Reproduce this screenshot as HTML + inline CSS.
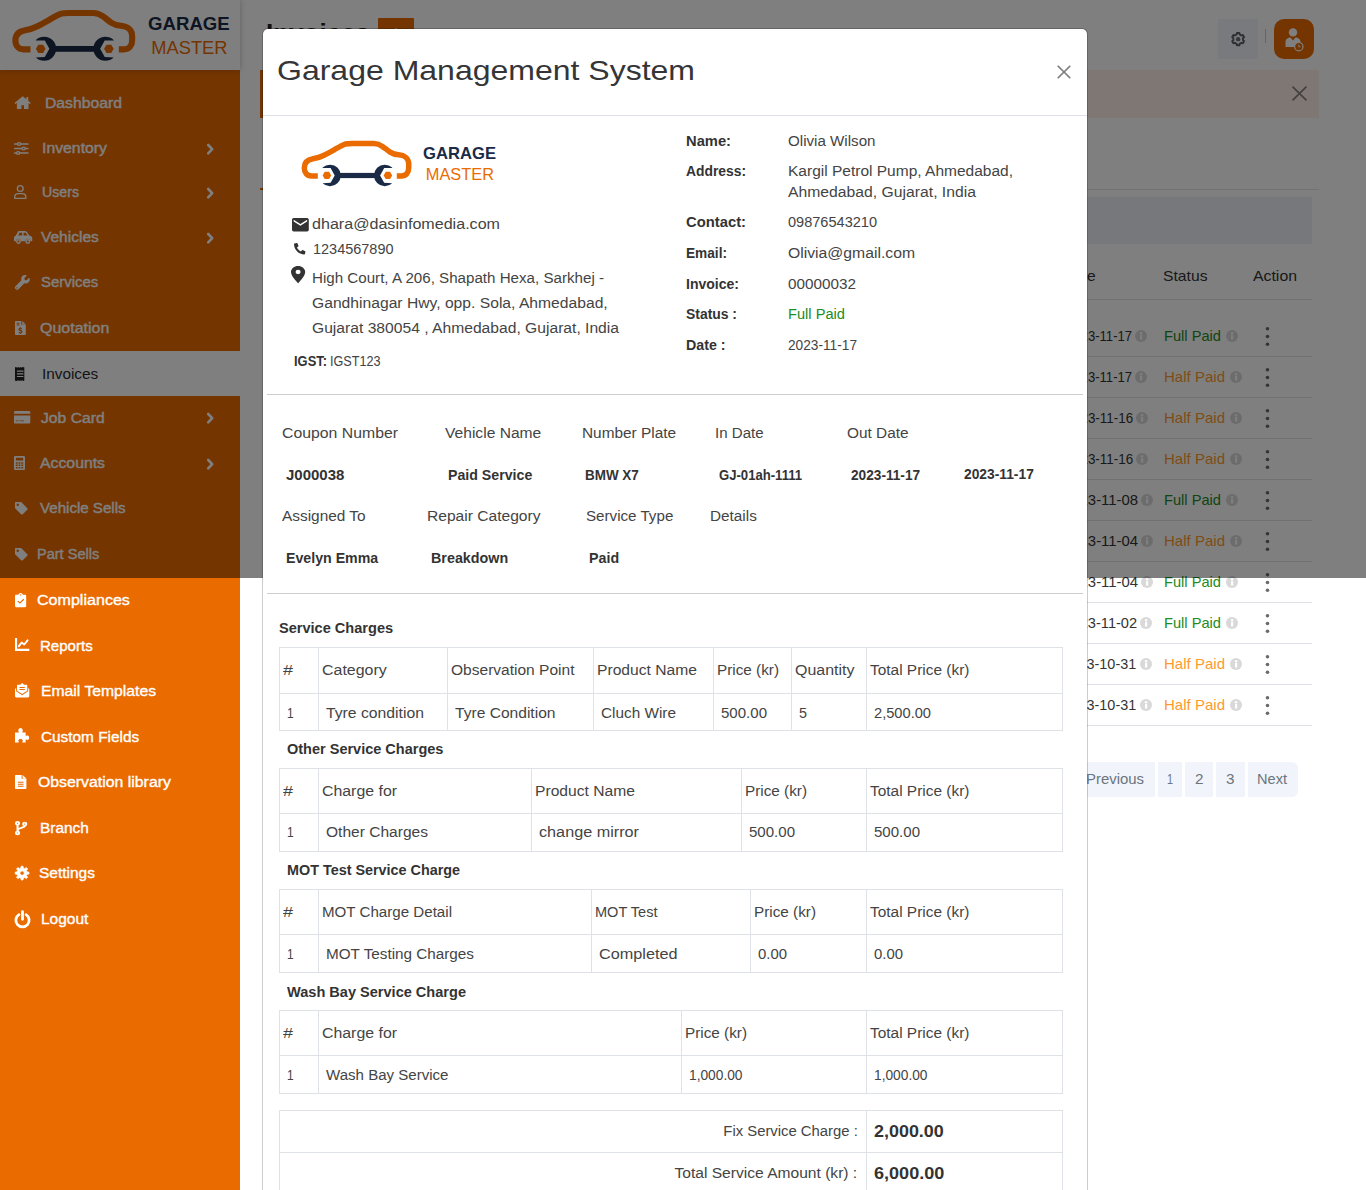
<!DOCTYPE html>
<html><head><meta charset="utf-8"><title>Invoices</title>
<style>
html,body{margin:0;padding:0}
body{width:1366px;height:1190px;overflow:hidden;background:#fff;position:relative;font-family:'Liberation Sans',sans-serif}
.a{position:absolute}
.t{position:absolute;white-space:pre;font-family:'Liberation Sans',sans-serif}
#page,#modal,#ov{position:absolute;left:0;top:0}
#page,#modal{width:1366px;height:1190px}
#ov{width:1366px;height:578px;background:rgba(0,0,0,.5)}
.ln{position:absolute;background:#dee2e6}
svg{position:absolute;overflow:visible}
</style></head>
<body>
<div id="page">
<div class="a" style="left:0px;top:70px;width:240px;height:1120px;background:#ea6b00;"></div>
<div class="a" style="left:0px;top:351px;width:240px;height:45px;background:#fff;"></div>
<div class="a" style="left:0px;top:0px;width:240px;height:70px;background:#fff;box-shadow:0 0 6px rgba(0,0,0,.25);"></div>
<svg style="left:4.5px;top:-2.1px" width="234.8" height="72.7" viewBox="0 0 210 65">
<path d="M22.8 45.9H16.5C12 45.9 9.3 42.5 9.3 38C9.3 32.5 13 29.6 18 28.8C23 28 26 26.8 28.5 25.5C33 23.3 36.5 21.3 40 19.3C44 17 47 15.2 50.4 14C52.5 13.4 54.5 13.4 57 13.4H79C82.5 13.4 85 14.6 87.5 16.4C90.5 18.5 92.5 20.4 95.1 22.1C98 24 100.5 24.600 103.7 24.8C109.5 25.2 113.7 28.5 113.7 34V38C113.7 42.5 111 45.9 106.5 45.9H101.8" fill="none" stroke="#ea6b00" stroke-width="5.5" stroke-linejoin="round"/>
<path d="M27.6 37.6A10.75 10.75 0 1 1 27.6 53.2L35.6 52.7L39.7 45.4L35.6 38.1L27.6 38.1Z M97.2 37.6A10.75 10.75 0 1 0 97.2 53.2L89.2 52.7L85.1 45.4L89.2 38.1L97.2 38.1Z" fill="#1b2a47"/>
<rect x="44" y="42.9" width="36.8" height="5.2" fill="#1b2a47"/>
<path d="M36.2 45.4L34.05 49.1H29.75L27.6 45.4L29.75 41.7H34.05Z M97.2 45.4L95.05 49.1H90.75L88.6 45.4L90.75 41.7H95.05Z" fill="#ea6b00"/>
<text x="128" y="28.6" font-family="'Liberation Sans',sans-serif" font-weight="700" font-size="17" fill="#1b2a47" textLength="73" lengthAdjust="spacingAndGlyphs">GARAGE</text>
<text x="130.8" y="50.1" font-family="'Liberation Sans',sans-serif" font-size="17.2" fill="#ea6b00" textLength="68.2" lengthAdjust="spacingAndGlyphs">MASTER</text>
</svg>
<div class="a" style="left:378px;top:18px;width:36px;height:30px;background:#ea6b00;border-radius:1px;"></div>
<div class="a" style="left:1218px;top:19px;width:40px;height:40px;background:#f1f4fb;"></div>
<div class="a" style="left:1265px;top:29px;width:1px;height:14px;background:#c8c8c8;"></div>
<div class="a" style="left:1274px;top:19px;width:40px;height:40px;background:#ea6b00;border-radius:10px;"></div>
<div class="a" style="left:260px;top:70px;width:1059px;height:47.5px;background:#ffefe6;border-left:3px solid #ea6b00;box-sizing:border-box;"></div>
<div class="a" style="left:260px;top:189px;width:1059px;height:1px;background:#dee2e6;"></div>
<div class="a" style="left:260px;top:187.5px;width:10px;height:2.5px;background:#ea6b00;"></div>
<div class="a" style="left:267px;top:197px;width:1045px;height:47px;background:#eef1f7;"></div>
<div class="a" style="left:267px;top:299px;width:1045px;height:1px;background:#dee2e6;"></div>
<div class="a" style="left:267px;top:356px;width:1045px;height:1px;background:#dee2e6;"></div>
<div class="a" style="left:267px;top:397px;width:1045px;height:1px;background:#dee2e6;"></div>
<div class="a" style="left:267px;top:438px;width:1045px;height:1px;background:#dee2e6;"></div>
<div class="a" style="left:267px;top:479px;width:1045px;height:1px;background:#dee2e6;"></div>
<div class="a" style="left:267px;top:520px;width:1045px;height:1px;background:#dee2e6;"></div>
<div class="a" style="left:267px;top:561px;width:1045px;height:1px;background:#dee2e6;"></div>
<div class="a" style="left:267px;top:602px;width:1045px;height:1px;background:#dee2e6;"></div>
<div class="a" style="left:267px;top:643px;width:1045px;height:1px;background:#dee2e6;"></div>
<div class="a" style="left:267px;top:684px;width:1045px;height:1px;background:#dee2e6;"></div>
<div class="a" style="left:267px;top:725px;width:1045px;height:1px;background:#dee2e6;"></div>
<div class="a" style="left:1075px;top:762px;width:80px;height:35px;background:#f1f4fa;border-radius:0;"></div>
<div class="a" style="left:1158px;top:762px;width:24px;height:35px;background:#f1f4fa;border-radius:0;"></div>
<div class="a" style="left:1185px;top:762px;width:28px;height:35px;background:#f1f4fa;border-radius:0;"></div>
<div class="a" style="left:1216px;top:762px;width:29px;height:35px;background:#f1f4fa;border-radius:0;"></div>
<div class="a" style="left:1248px;top:762px;width:50px;height:35px;background:#f1f4fa;border-radius:0 6px 6px 0;"></div>
<svg style="left:14.3px;top:95.30px" width="17.4" height="15" viewBox="0 0 576 512" preserveAspectRatio="none"><path d="M288 40L16 270l34 40 46-38v208h150V350h84v130h150V272l46 38 34-40-88-74V70h-60v76z" fill="#fff"/></svg>
<svg style="left:13.5px;top:141.80px" width="14.7" height="13" viewBox="0 0 512 512" preserveAspectRatio="none"><rect x="0" y="50" width="512" height="60" rx="26" fill="#fff"/><circle cx="176" cy="80" r="78" fill="#fff"/><circle cx="176" cy="80" r="30" fill="#ea6b00"/><rect x="0" y="226" width="512" height="60" rx="26" fill="#fff"/><circle cx="336" cy="256" r="78" fill="#fff"/><circle cx="336" cy="256" r="30" fill="#ea6b00"/><rect x="0" y="402" width="512" height="60" rx="26" fill="#fff"/><circle cx="144" cy="432" r="78" fill="#fff"/><circle cx="144" cy="432" r="30" fill="#ea6b00"/></svg>
<svg style="left:13.7px;top:184.80px" width="12.5" height="14" viewBox="0 0 448 512" preserveAspectRatio="none"><circle cx="224" cy="128" r="104" fill="none" stroke="#fff" stroke-width="48"/><path d="M24 488v-40c0-80 60-130 130-130h140c70 0 130 50 130 130v40z" fill="none" stroke="#fff" stroke-width="48" stroke-linejoin="round"/></svg>
<svg style="left:13.7px;top:230.50px" width="18" height="13" viewBox="0 0 640 460" preserveAspectRatio="none"><path d="M60 170L130 40c10-20 30-40 60-40h200c30 0 50 10 70 35l80 120c50 10 110 30 110 110v70c0 15-10 25-25 25h-45a90 90 0 0 0-180 0H250a90 90 0 0 0-180 0H25c-15 0-25-10-25-25V250c0-40 25-70 60-80zm90-10h140V60h-95zm190 0h140l-65-100h-75z" fill="#fff" fill-rule="evenodd"/><circle cx="160" cy="370" r="62" fill="none" stroke="#fff" stroke-width="50"/><circle cx="490" cy="370" r="62" fill="none" stroke="#fff" stroke-width="50"/></svg>
<svg style="left:14.5px;top:274.65px" width="14.7" height="14.7" viewBox="0 0 512 512" preserveAspectRatio="none"><path d="M507 114c-3-12-18-16-27-7l-74 74-68-11-11-68 74-74c9-9 5-24-8-27-47-12-99 1-136 38-40 40-51 97-34 147L10 399c-21 21-21 56 0 77l26 26c21 21 56 21 77 0l213-213c50 17 107 6 147-34 37-37 50-89 34-141zM64 472a24 24 0 1 1 0-48 24 24 0 0 1 0 48z" fill="#fff" fill-rule="evenodd"/></svg>
<svg style="left:14.6px;top:320.80px" width="10.8" height="14" viewBox="0 0 384 512" preserveAspectRatio="none"><path d="M0 24C0 10 10 0 24 0h200v136h160v352c0 14-10 24-24 24H24c-14 0-24-10-24-24zM256 0l128 128H256zM60 64v32h100V64zm0 64v32h100v-32zm112 100v26c-30 6-50 28-50 56 0 60 92 50 92 80 0 14-14 20-30 20-14 0-30-6-44-14l-14 32c14 8 30 14 46 16v28h40v-28c34-6 52-30 52-58 0-64-92-52-92-80 0-12 12-18 26-18 12 0 24 4 36 10l14-32c-12-6-24-10-36-12v-26z" fill="#fff" fill-rule="evenodd"/></svg>
<svg style="left:15px;top:366.50px" width="10.4" height="14" viewBox="0 0 384 512" preserveAspectRatio="none"><path d="M0 12l40-12 40 24 40-24 36 24 36-24 40 24 40-24 32 12 40 0v488l-40 12-40-24-40 24-36-24-36 24-40-24-40 24L0 500zM72 130v40h240v-40zm0 100v40h240v-40zm0 100v40h240v-40z" fill="#222" fill-rule="evenodd"/></svg>
<svg style="left:13.6px;top:411.30px" width="16.3" height="12.6" viewBox="0 0 576 448" preserveAspectRatio="none"><path d="M0 48C0 21 21 0 48 0h480c27 0 48 21 48 48v48H0zm0 112h576v240c0 27-21 48-48 48H48c-27 0-48-21-48-48zm64 176v32h96v-32zm128 0v32h160v-32z" fill="#fff" fill-rule="evenodd"/></svg>
<svg style="left:13.6px;top:456.00px" width="11" height="14" viewBox="0 0 384 512" preserveAspectRatio="none"><path d="M0 48C0 21 21 0 48 0h288c27 0 48 21 48 48v416c0 27-21 48-48 48H48c-27 0-48-21-48-48zM64 64v96h256V64zM64 224h64v56h-64zM160 224h64v56h-64zM256 224h64v56h-64zM64 312h64v56h-64zM160 312h64v56h-64zM256 312h64v56h-64zM64 400h64v56h-64zM160 400h64v56h-64zM256 400h64v56h-64z" fill="#fff" fill-rule="evenodd"/></svg>
<svg style="left:14.6px;top:501.70px" width="12.6" height="12.6" viewBox="0 0 512 512" preserveAspectRatio="none"><path d="M0 40C0 18 18 0 40 0h190c12 0 24 5 32 14l236 236c18 18 18 48 0 66L316 498c-18 18-48 18-66 0L14 262c-9-8-14-20-14-32zm112 24a48 48 0 1 0 0 96 48 48 0 0 0 0-96z" fill="#fff" fill-rule="evenodd"/></svg>
<svg style="left:14.6px;top:547.70px" width="12.6" height="12.6" viewBox="0 0 512 512" preserveAspectRatio="none"><path d="M0 40C0 18 18 0 40 0h190c12 0 24 5 32 14l236 236c18 18 18 48 0 66L316 498c-18 18-48 18-66 0L14 262c-9-8-14-20-14-32zm112 24a48 48 0 1 0 0 96 48 48 0 0 0 0-96z" fill="#fff" fill-rule="evenodd"/></svg>
<svg style="left:14.7px;top:592.60px" width="11.2" height="14.2" viewBox="0 0 384 512" preserveAspectRatio="none"><path d="M40 64h76c8-36 38-64 76-64s68 28 76 64h76c22 0 40 18 40 40v368c0 22-18 40-40 40H40c-22 0-40-18-40-40V104c0-22 18-40 40-40zm152-20a24 24 0 1 0 0 48 24 24 0 0 0 0-48zM166 392l150-150-30-30-120 120-56-56-30 30z" fill="#fff" fill-rule="evenodd"/></svg>
<svg style="left:14.7px;top:638.00px" width="14.3" height="13" viewBox="0 0 512 460" preserveAspectRatio="none"><path d="M0 0h76v384h436v76H0z" fill="#fff"/><path d="M140 290l100-130 90 70 120-150" fill="none" stroke="#fff" stroke-width="70" stroke-linecap="round" stroke-linejoin="round"/></svg>
<svg style="left:14.7px;top:683.20px" width="14.3" height="14.4" viewBox="0 0 512 512" preserveAspectRatio="none"><path d="M96 60h90l70-60 70 60h90c14 0 24 10 24 24v190l-184 120L72 274V84c0-14 10-24 24-24zm64 84v36h192v-36zm0 72v36h192v-36zM0 216l40-34v112l216 146 216-146V182l40 34v248c0 26-22 48-48 48H48c-26 0-48-22-48-48z" fill="#fff" fill-rule="evenodd"/></svg>
<svg style="left:14.7px;top:728.30px" width="14.2" height="14.4" viewBox="0 0 512 512" preserveAspectRatio="none"><path d="M0 160h128c10 0 14-10 8-20-10-16-16-30-16-50 0-50 36-90 80-90s80 40 80 90c0 20-6 34-16 50-6 10-2 20 8 20h112v112c0 10 10 14 20 8 16-10 30-16 50-16 32 0 58 36 58 80s-26 80-58 80c-20 0-34-6-50-16-10-6-20-2-20 8v96H272c-10 0-14-10-8-20 10-16 16-24 16-44 0-36-36-60-80-60s-80 24-80 60c0 20 6 28 16 44 6 10 2 20-8 20H0z" fill="#fff"/></svg>
<svg style="left:14.7px;top:775.00px" width="11.4" height="14" viewBox="0 0 384 512" preserveAspectRatio="none"><path d="M0 24C0 10 10 0 24 0h200v136h160v352c0 14-10 24-24 24H24c-14 0-24-10-24-24zM256 0l128 128H256zM96 250v36h192v-36zm0 70v36h192v-36zm0 70v36h192v-36z" fill="#fff" fill-rule="evenodd"/></svg>
<svg style="left:14.7px;top:820.90px" width="12.3" height="14.2" viewBox="0 0 384 512" preserveAspectRatio="none"><circle cx="80" cy="80" r="50" fill="none" stroke="#fff" stroke-width="62"/><circle cx="80" cy="432" r="50" fill="none" stroke="#fff" stroke-width="62"/><circle cx="304" cy="112" r="50" fill="none" stroke="#fff" stroke-width="62"/><path d="M80 140v240M304 170c0 90-224 60-224 170" fill="none" stroke="#fff" stroke-width="66"/></svg>
<svg style="left:14.7px;top:865.90px" width="14.2" height="14.2" viewBox="0 0 512 512" preserveAspectRatio="none"><path d="M504 224 L504 288 L430 303 L412 346 L454 408 L408 454 L346 412 L303 430 L288 504 L224 504 L209 430 L166 412 L104 454 L58 408 L100 346 L82 303 L8 288 L8 224 L82 209 L100 166 L58 104 L104 58 L166 100 L209 82 L224 8 L288 8 L303 82 L346 100 L408 58 L454 104 L412 166 L430 209Z M256 176a80 80 0 1 0 0 160 80 80 0 0 0 0-160z" fill="#fff" fill-rule="evenodd" stroke="#fff" stroke-width="30" stroke-linejoin="round"/></svg>
<svg style="left:14px;top:910.50px" width="17" height="17" viewBox="0 0 512 512" preserveAspectRatio="none"><path d="M150 110A200 200 0 1 0 362 110" fill="none" stroke="#fff" stroke-width="84" stroke-linecap="round"/><path d="M256 20v230" stroke="#fff" stroke-width="84" stroke-linecap="round"/></svg>
<svg style="left:207.3px;top:143.80px" width="6.6" height="10.4" viewBox="0 0 66 104" preserveAspectRatio="none"><path d="M12 10l40 42-40 42" fill="none" stroke="#fff" stroke-width="26" stroke-linecap="round" stroke-linejoin="round"/></svg>
<svg style="left:207.3px;top:187.80px" width="6.6" height="10.4" viewBox="0 0 66 104" preserveAspectRatio="none"><path d="M12 10l40 42-40 42" fill="none" stroke="#fff" stroke-width="26" stroke-linecap="round" stroke-linejoin="round"/></svg>
<svg style="left:207.3px;top:232.80px" width="6.6" height="10.4" viewBox="0 0 66 104" preserveAspectRatio="none"><path d="M12 10l40 42-40 42" fill="none" stroke="#fff" stroke-width="26" stroke-linecap="round" stroke-linejoin="round"/></svg>
<svg style="left:207.3px;top:413.30px" width="6.6" height="10.4" viewBox="0 0 66 104" preserveAspectRatio="none"><path d="M12 10l40 42-40 42" fill="none" stroke="#fff" stroke-width="26" stroke-linecap="round" stroke-linejoin="round"/></svg>
<svg style="left:207.3px;top:458.80px" width="6.6" height="10.4" viewBox="0 0 66 104" preserveAspectRatio="none"><path d="M12 10l40 42-40 42" fill="none" stroke="#fff" stroke-width="26" stroke-linecap="round" stroke-linejoin="round"/></svg>
<svg style="left:391px;top:28.00px" width="10" height="10" viewBox="0 0 10 10" preserveAspectRatio="none"><path d="M5 0v10M0 5h10" stroke="#fff" stroke-width="1.6"/></svg>
<svg style="left:1230.85px;top:31.80px" width="14.3" height="14.3" viewBox="0 0 14.3 14.3" preserveAspectRatio="none"><path d="M8.40 13.32 L5.90 13.32 L5.59 11.80 L3.91 10.82 L2.43 11.32 L1.18 9.15 L2.35 8.12 L2.35 6.18 L1.18 5.15 L2.43 2.98 L3.91 3.48 L5.59 2.50 L5.90 0.98 L8.40 0.98 L8.71 2.50 L10.39 3.48 L11.87 2.98 L13.12 5.15 L11.95 6.18 L11.95 8.12 L13.12 9.15 L11.87 11.32 L10.39 10.82 L8.71 11.80Z" fill="none" stroke="#5a5d62" stroke-width="1.9" stroke-linejoin="round"/><circle cx="7.15" cy="7.15" r="2.2" fill="#6a6d72"/></svg>
<svg style="left:1283.5px;top:26.50px" width="22" height="24" viewBox="0 0 22 24" preserveAspectRatio="none"><circle cx="9" cy="5.4" r="4.2" fill="#fff"/><path d="M1.5 20v-5c0-3 2.500-4.600 5-4.600l2.500 3 2.500-3c2.500 0 5 1.600 5 4.600v5z" fill="#fff"/><circle cx="14.800" cy="19.700" r="4.200" fill="#ea6b00" stroke="#fff" stroke-width="1.200"/><path d="M14.800 17.800v2h1.600" stroke="#fff" stroke-width="1" fill="none"/></svg>
<svg style="left:1292px;top:86.10px" width="15" height="15" viewBox="0 0 14 14" preserveAspectRatio="none"><path d="M0.500 0.500L13.500 13.500M13.500 0.500L0.500 13.500" stroke="#8a827e" stroke-width="1.600" fill="none"/></svg>
<svg style="left:1134.8px;top:329.80px" width="12" height="12" viewBox="0 0 12 12" preserveAspectRatio="none"><circle cx="6" cy="6" r="6" fill="#d9d9d9"/><rect x="5" y="5" width="2.200" height="4.500" fill="#fff"/><circle cx="6.100" cy="3.200" r="1.200" fill="#fff"/></svg>
<svg style="left:1226px;top:330.00px" width="12" height="12" viewBox="0 0 12 12" preserveAspectRatio="none"><circle cx="6" cy="6" r="6" fill="#d9d9d9"/><rect x="5" y="5" width="2.200" height="4.500" fill="#fff"/><circle cx="6.100" cy="3.200" r="1.200" fill="#fff"/></svg>
<svg style="left:1264.5px;top:326.00px" width="5" height="20" viewBox="0 0 5 20" preserveAspectRatio="none"><circle cx="2.500" cy="2.700" r="1.800" fill="#6b6b6b"/><circle cx="2.500" cy="10.500" r="1.800" fill="#6b6b6b"/><circle cx="2.500" cy="18.300" r="1.800" fill="#6b6b6b"/></svg>
<svg style="left:1134.8px;top:370.80px" width="12" height="12" viewBox="0 0 12 12" preserveAspectRatio="none"><circle cx="6" cy="6" r="6" fill="#d9d9d9"/><rect x="5" y="5" width="2.200" height="4.500" fill="#fff"/><circle cx="6.100" cy="3.200" r="1.200" fill="#fff"/></svg>
<svg style="left:1230.3px;top:371.00px" width="12" height="12" viewBox="0 0 12 12" preserveAspectRatio="none"><circle cx="6" cy="6" r="6" fill="#d9d9d9"/><rect x="5" y="5" width="2.200" height="4.500" fill="#fff"/><circle cx="6.100" cy="3.200" r="1.200" fill="#fff"/></svg>
<svg style="left:1264.5px;top:367.00px" width="5" height="20" viewBox="0 0 5 20" preserveAspectRatio="none"><circle cx="2.500" cy="2.700" r="1.800" fill="#6b6b6b"/><circle cx="2.500" cy="10.500" r="1.800" fill="#6b6b6b"/><circle cx="2.500" cy="18.300" r="1.800" fill="#6b6b6b"/></svg>
<svg style="left:1135.8px;top:411.80px" width="12" height="12" viewBox="0 0 12 12" preserveAspectRatio="none"><circle cx="6" cy="6" r="6" fill="#d9d9d9"/><rect x="5" y="5" width="2.200" height="4.500" fill="#fff"/><circle cx="6.100" cy="3.200" r="1.200" fill="#fff"/></svg>
<svg style="left:1230.3px;top:412.00px" width="12" height="12" viewBox="0 0 12 12" preserveAspectRatio="none"><circle cx="6" cy="6" r="6" fill="#d9d9d9"/><rect x="5" y="5" width="2.200" height="4.500" fill="#fff"/><circle cx="6.100" cy="3.200" r="1.200" fill="#fff"/></svg>
<svg style="left:1264.5px;top:408.00px" width="5" height="20" viewBox="0 0 5 20" preserveAspectRatio="none"><circle cx="2.500" cy="2.700" r="1.800" fill="#6b6b6b"/><circle cx="2.500" cy="10.500" r="1.800" fill="#6b6b6b"/><circle cx="2.500" cy="18.300" r="1.800" fill="#6b6b6b"/></svg>
<svg style="left:1135.8px;top:452.80px" width="12" height="12" viewBox="0 0 12 12" preserveAspectRatio="none"><circle cx="6" cy="6" r="6" fill="#d9d9d9"/><rect x="5" y="5" width="2.200" height="4.500" fill="#fff"/><circle cx="6.100" cy="3.200" r="1.200" fill="#fff"/></svg>
<svg style="left:1230.3px;top:453.00px" width="12" height="12" viewBox="0 0 12 12" preserveAspectRatio="none"><circle cx="6" cy="6" r="6" fill="#d9d9d9"/><rect x="5" y="5" width="2.200" height="4.500" fill="#fff"/><circle cx="6.100" cy="3.200" r="1.200" fill="#fff"/></svg>
<svg style="left:1264.5px;top:449.00px" width="5" height="20" viewBox="0 0 5 20" preserveAspectRatio="none"><circle cx="2.500" cy="2.700" r="1.800" fill="#6b6b6b"/><circle cx="2.500" cy="10.500" r="1.800" fill="#6b6b6b"/><circle cx="2.500" cy="18.300" r="1.800" fill="#6b6b6b"/></svg>
<svg style="left:1140.8px;top:493.80px" width="12" height="12" viewBox="0 0 12 12" preserveAspectRatio="none"><circle cx="6" cy="6" r="6" fill="#d9d9d9"/><rect x="5" y="5" width="2.200" height="4.500" fill="#fff"/><circle cx="6.100" cy="3.200" r="1.200" fill="#fff"/></svg>
<svg style="left:1226px;top:494.00px" width="12" height="12" viewBox="0 0 12 12" preserveAspectRatio="none"><circle cx="6" cy="6" r="6" fill="#d9d9d9"/><rect x="5" y="5" width="2.200" height="4.500" fill="#fff"/><circle cx="6.100" cy="3.200" r="1.200" fill="#fff"/></svg>
<svg style="left:1264.5px;top:490.00px" width="5" height="20" viewBox="0 0 5 20" preserveAspectRatio="none"><circle cx="2.500" cy="2.700" r="1.800" fill="#6b6b6b"/><circle cx="2.500" cy="10.500" r="1.800" fill="#6b6b6b"/><circle cx="2.500" cy="18.300" r="1.800" fill="#6b6b6b"/></svg>
<svg style="left:1140.8px;top:534.80px" width="12" height="12" viewBox="0 0 12 12" preserveAspectRatio="none"><circle cx="6" cy="6" r="6" fill="#d9d9d9"/><rect x="5" y="5" width="2.200" height="4.500" fill="#fff"/><circle cx="6.100" cy="3.200" r="1.200" fill="#fff"/></svg>
<svg style="left:1230.3px;top:535.00px" width="12" height="12" viewBox="0 0 12 12" preserveAspectRatio="none"><circle cx="6" cy="6" r="6" fill="#d9d9d9"/><rect x="5" y="5" width="2.200" height="4.500" fill="#fff"/><circle cx="6.100" cy="3.200" r="1.200" fill="#fff"/></svg>
<svg style="left:1264.5px;top:531.00px" width="5" height="20" viewBox="0 0 5 20" preserveAspectRatio="none"><circle cx="2.500" cy="2.700" r="1.800" fill="#6b6b6b"/><circle cx="2.500" cy="10.500" r="1.800" fill="#6b6b6b"/><circle cx="2.500" cy="18.300" r="1.800" fill="#6b6b6b"/></svg>
<svg style="left:1140.8px;top:575.80px" width="12" height="12" viewBox="0 0 12 12" preserveAspectRatio="none"><circle cx="6" cy="6" r="6" fill="#d9d9d9"/><rect x="5" y="5" width="2.200" height="4.500" fill="#fff"/><circle cx="6.100" cy="3.200" r="1.200" fill="#fff"/></svg>
<svg style="left:1226px;top:576.00px" width="12" height="12" viewBox="0 0 12 12" preserveAspectRatio="none"><circle cx="6" cy="6" r="6" fill="#d9d9d9"/><rect x="5" y="5" width="2.200" height="4.500" fill="#fff"/><circle cx="6.100" cy="3.200" r="1.200" fill="#fff"/></svg>
<svg style="left:1264.5px;top:572.00px" width="5" height="20" viewBox="0 0 5 20" preserveAspectRatio="none"><circle cx="2.500" cy="2.700" r="1.800" fill="#6b6b6b"/><circle cx="2.500" cy="10.500" r="1.800" fill="#6b6b6b"/><circle cx="2.500" cy="18.300" r="1.800" fill="#6b6b6b"/></svg>
<svg style="left:1139.8px;top:616.80px" width="12" height="12" viewBox="0 0 12 12" preserveAspectRatio="none"><circle cx="6" cy="6" r="6" fill="#d9d9d9"/><rect x="5" y="5" width="2.200" height="4.500" fill="#fff"/><circle cx="6.100" cy="3.200" r="1.200" fill="#fff"/></svg>
<svg style="left:1226px;top:617.00px" width="12" height="12" viewBox="0 0 12 12" preserveAspectRatio="none"><circle cx="6" cy="6" r="6" fill="#d9d9d9"/><rect x="5" y="5" width="2.200" height="4.500" fill="#fff"/><circle cx="6.100" cy="3.200" r="1.200" fill="#fff"/></svg>
<svg style="left:1264.5px;top:613.00px" width="5" height="20" viewBox="0 0 5 20" preserveAspectRatio="none"><circle cx="2.500" cy="2.700" r="1.800" fill="#6b6b6b"/><circle cx="2.500" cy="10.500" r="1.800" fill="#6b6b6b"/><circle cx="2.500" cy="18.300" r="1.800" fill="#6b6b6b"/></svg>
<svg style="left:1139.8px;top:657.80px" width="12" height="12" viewBox="0 0 12 12" preserveAspectRatio="none"><circle cx="6" cy="6" r="6" fill="#d9d9d9"/><rect x="5" y="5" width="2.200" height="4.500" fill="#fff"/><circle cx="6.100" cy="3.200" r="1.200" fill="#fff"/></svg>
<svg style="left:1230.3px;top:658.00px" width="12" height="12" viewBox="0 0 12 12" preserveAspectRatio="none"><circle cx="6" cy="6" r="6" fill="#d9d9d9"/><rect x="5" y="5" width="2.200" height="4.500" fill="#fff"/><circle cx="6.100" cy="3.200" r="1.200" fill="#fff"/></svg>
<svg style="left:1264.5px;top:654.00px" width="5" height="20" viewBox="0 0 5 20" preserveAspectRatio="none"><circle cx="2.500" cy="2.700" r="1.800" fill="#6b6b6b"/><circle cx="2.500" cy="10.500" r="1.800" fill="#6b6b6b"/><circle cx="2.500" cy="18.300" r="1.800" fill="#6b6b6b"/></svg>
<svg style="left:1139.8px;top:698.80px" width="12" height="12" viewBox="0 0 12 12" preserveAspectRatio="none"><circle cx="6" cy="6" r="6" fill="#d9d9d9"/><rect x="5" y="5" width="2.200" height="4.500" fill="#fff"/><circle cx="6.100" cy="3.200" r="1.200" fill="#fff"/></svg>
<svg style="left:1230.3px;top:699.00px" width="12" height="12" viewBox="0 0 12 12" preserveAspectRatio="none"><circle cx="6" cy="6" r="6" fill="#d9d9d9"/><rect x="5" y="5" width="2.200" height="4.500" fill="#fff"/><circle cx="6.100" cy="3.200" r="1.200" fill="#fff"/></svg>
<svg style="left:1264.5px;top:695.00px" width="5" height="20" viewBox="0 0 5 20" preserveAspectRatio="none"><circle cx="2.500" cy="2.700" r="1.800" fill="#6b6b6b"/><circle cx="2.500" cy="10.500" r="1.800" fill="#6b6b6b"/><circle cx="2.500" cy="18.300" r="1.800" fill="#6b6b6b"/></svg>
<span class="t" style="left:45.40px;transform-origin:0 50%;top:93.45px;font-size:14px;line-height:21px;color:#fff;transform:scaleX(1.1241);-webkit-text-stroke:0.35px #fff;">Dashboard</span>
<span class="t" style="left:42.40px;transform-origin:0 50%;top:138.45px;font-size:14px;line-height:21px;color:#fff;transform:scaleX(1.1286);-webkit-text-stroke:0.35px #fff;">Inventory</span>
<span class="t" style="left:42.40px;transform-origin:0 50%;top:182.15px;font-size:14px;line-height:21px;color:#fff;transform:scaleX(1.0120);-webkit-text-stroke:0.35px #fff;">Users</span>
<span class="t" style="left:41.20px;transform-origin:0 50%;top:227.15px;font-size:14px;line-height:21px;color:#fff;transform:scaleX(1.1082);-webkit-text-stroke:0.35px #fff;">Vehicles</span>
<span class="t" style="left:41.40px;transform-origin:0 50%;top:272.35px;font-size:14px;line-height:21px;color:#fff;transform:scaleX(1.0654);-webkit-text-stroke:0.35px #fff;">Services</span>
<span class="t" style="left:40.10px;transform-origin:0 50%;top:317.95px;font-size:14px;line-height:21px;color:#fff;transform:scaleX(1.1413);-webkit-text-stroke:0.35px #fff;">Quotation</span>
<span class="t" style="left:42.20px;transform-origin:0 50%;top:363.65px;font-size:14px;line-height:21px;color:#2b2b33;transform:scaleX(1.0943);">Invoices</span>
<span class="t" style="left:41.30px;transform-origin:0 50%;top:407.75px;font-size:14px;line-height:21px;color:#fff;transform:scaleX(1.1212);-webkit-text-stroke:0.35px #fff;">Job Card</span>
<span class="t" style="left:40.40px;transform-origin:0 50%;top:453.15px;font-size:14px;line-height:21px;color:#fff;transform:scaleX(1.1286);-webkit-text-stroke:0.35px #fff;">Accounts</span>
<span class="t" style="left:40.40px;transform-origin:0 50%;top:498.15px;font-size:14px;line-height:21px;color:#fff;transform:scaleX(1.0782);-webkit-text-stroke:0.35px #fff;">Vehicle Sells</span>
<span class="t" style="left:37.00px;transform-origin:0 50%;top:544.15px;font-size:14px;line-height:21px;color:#fff;transform:scaleX(1.0380);-webkit-text-stroke:0.35px #fff;">Part Sells</span>
<span class="t" style="left:37.10px;transform-origin:0 50%;top:590.45px;font-size:14px;line-height:21px;color:#fff;transform:scaleX(1.1478);-webkit-text-stroke:0.35px #fff;">Compliances</span>
<span class="t" style="left:40.00px;transform-origin:0 50%;top:635.55px;font-size:14px;line-height:21px;color:#fff;transform:scaleX(1.0748);-webkit-text-stroke:0.35px #fff;">Reports</span>
<span class="t" style="left:40.60px;transform-origin:0 50%;top:681.15px;font-size:14px;line-height:21px;color:#fff;transform:scaleX(1.1225);-webkit-text-stroke:0.35px #fff;">Email Templates</span>
<span class="t" style="left:40.60px;transform-origin:0 50%;top:726.55px;font-size:14px;line-height:21px;color:#fff;transform:scaleX(1.0965);-webkit-text-stroke:0.35px #fff;">Custom Fields</span>
<span class="t" style="left:38.00px;transform-origin:0 50%;top:772.15px;font-size:14px;line-height:21px;color:#fff;transform:scaleX(1.1311);-webkit-text-stroke:0.35px #fff;">Observation library</span>
<span class="t" style="left:40.00px;transform-origin:0 50%;top:818.15px;font-size:14px;line-height:21px;color:#fff;transform:scaleX(1.1001);-webkit-text-stroke:0.35px #fff;">Branch</span>
<span class="t" style="left:39.30px;transform-origin:0 50%;top:863.15px;font-size:14px;line-height:21px;color:#fff;transform:scaleX(1.1049);-webkit-text-stroke:0.35px #fff;">Settings</span>
<span class="t" style="left:40.60px;transform-origin:0 50%;top:909.15px;font-size:14px;line-height:21px;color:#fff;transform:scaleX(1.1044);-webkit-text-stroke:0.35px #fff;">Logout</span>
<span class="t" style="left:1163.40px;transform-origin:0 50%;top:265.48px;font-size:14.5px;line-height:22px;color:#333;transform:scaleX(1.0825);">Status</span>
<span class="t" style="left:1253.40px;transform-origin:0 50%;top:265.48px;font-size:14.5px;line-height:22px;color:#333;transform:scaleX(1.0915);">Action</span>
<span class="t" style="right:270.50px;transform-origin:100% 50%;top:265.48px;font-size:14.5px;line-height:22px;color:#333;transform:scaleX(1.0770);">Date</span>
<span class="t" style="right:234.40px;transform-origin:100% 50%;top:325.28px;font-size:14.5px;line-height:22px;color:#333;transform:scaleX(0.9041);">2023-11-17</span>
<span class="t" style="left:1164.10px;transform-origin:0 50%;top:325.28px;font-size:14.5px;line-height:22px;color:#228B22;transform:scaleX(1.0102);">Full Paid</span>
<span class="t" style="right:234.40px;transform-origin:100% 50%;top:366.28px;font-size:14.5px;line-height:22px;color:#333;transform:scaleX(0.9041);">2023-11-17</span>
<span class="t" style="left:1164.10px;transform-origin:0 50%;top:366.28px;font-size:14.5px;line-height:22px;color:#fd9a2e;transform:scaleX(1.0366);">Half Paid</span>
<span class="t" style="right:233.40px;transform-origin:100% 50%;top:407.28px;font-size:14.5px;line-height:22px;color:#333;transform:scaleX(0.9246);">2023-11-16</span>
<span class="t" style="left:1164.10px;transform-origin:0 50%;top:407.28px;font-size:14.5px;line-height:22px;color:#fd9a2e;transform:scaleX(1.0366);">Half Paid</span>
<span class="t" style="right:233.40px;transform-origin:100% 50%;top:448.28px;font-size:14.5px;line-height:22px;color:#333;transform:scaleX(0.9246);">2023-11-16</span>
<span class="t" style="left:1164.10px;transform-origin:0 50%;top:448.28px;font-size:14.5px;line-height:22px;color:#fd9a2e;transform:scaleX(1.0366);">Half Paid</span>
<span class="t" style="right:228.40px;transform-origin:100% 50%;top:489.28px;font-size:14.5px;line-height:22px;color:#333;transform:scaleX(1.0272);">2023-11-08</span>
<span class="t" style="left:1164.10px;transform-origin:0 50%;top:489.28px;font-size:14.5px;line-height:22px;color:#228B22;transform:scaleX(1.0102);">Full Paid</span>
<span class="t" style="right:228.40px;transform-origin:100% 50%;top:530.28px;font-size:14.5px;line-height:22px;color:#333;transform:scaleX(1.0272);">2023-11-04</span>
<span class="t" style="left:1164.10px;transform-origin:0 50%;top:530.28px;font-size:14.5px;line-height:22px;color:#fd9a2e;transform:scaleX(1.0366);">Half Paid</span>
<span class="t" style="right:228.40px;transform-origin:100% 50%;top:571.28px;font-size:14.5px;line-height:22px;color:#333;transform:scaleX(1.0272);">2023-11-04</span>
<span class="t" style="left:1164.10px;transform-origin:0 50%;top:571.28px;font-size:14.5px;line-height:22px;color:#228B22;transform:scaleX(1.0102);">Full Paid</span>
<span class="t" style="right:229.40px;transform-origin:100% 50%;top:612.28px;font-size:14.5px;line-height:22px;color:#333;transform:scaleX(1.0067);">2023-11-02</span>
<span class="t" style="left:1164.10px;transform-origin:0 50%;top:612.28px;font-size:14.5px;line-height:22px;color:#228B22;transform:scaleX(1.0102);">Full Paid</span>
<span class="t" style="right:229.40px;transform-origin:100% 50%;top:653.28px;font-size:14.5px;line-height:22px;color:#333;transform:scaleX(0.9923);">2023-10-31</span>
<span class="t" style="left:1164.10px;transform-origin:0 50%;top:653.28px;font-size:14.5px;line-height:22px;color:#fd9a2e;transform:scaleX(1.0366);">Half Paid</span>
<span class="t" style="right:229.40px;transform-origin:100% 50%;top:694.28px;font-size:14.5px;line-height:22px;color:#333;transform:scaleX(0.9923);">2023-10-31</span>
<span class="t" style="left:1164.10px;transform-origin:0 50%;top:694.28px;font-size:14.5px;line-height:22px;color:#fd9a2e;transform:scaleX(1.0366);">Half Paid</span>
<span class="t" style="left:1085.90px;transform-origin:0 50%;top:768.10px;font-size:15px;line-height:22px;color:#6c757d;transform:scaleX(0.9938);">Previous</span>
<span class="t" style="left:1166.90px;transform-origin:0 50%;top:768.10px;font-size:15px;line-height:22px;color:#6c757d;transform:scaleX(0.7200);">1</span>
<span class="t" style="left:1194.70px;transform-origin:0 50%;top:768.10px;font-size:15px;line-height:22px;color:#6c757d;transform:scaleX(1.0187);">2</span>
<span class="t" style="left:1225.90px;transform-origin:0 50%;top:768.10px;font-size:15px;line-height:22px;color:#6c757d;transform:scaleX(1.0187);">3</span>
<span class="t" style="left:1257.40px;transform-origin:0 50%;top:768.10px;font-size:15px;line-height:22px;color:#6c757d;transform:scaleX(0.9726);">Next</span>
<span class="t" style="left:265.90px;transform-origin:0 50%;top:14.58px;font-size:24px;line-height:36px;font-weight:700;color:#222;transform:scaleX(1.0828);">Invoices</span>
</div>
<div id="ov"></div>
<div id="modal">
<div class="a" style="left:262px;top:28px;width:826px;height:1200px;background:#fff;border:1px solid rgba(0,0,0,.2);border-radius:6px;box-sizing:border-box;background-clip:padding-box"></div>
<div class="a" style="left:263px;top:115px;width:824px;height:1px;background:#dee2e6;"></div>
<div class="a" style="left:267px;top:394px;width:816px;height:1px;background:#cecece;"></div>
<div class="a" style="left:267px;top:593px;width:816px;height:1px;background:#cecece;"></div>
<svg style="left:295px;top:130px" width="210" height="65" viewBox="0 0 210 65">
<path d="M22.8 45.9H16.5C12 45.9 9.3 42.5 9.3 38C9.3 32.5 13 29.6 18 28.8C23 28 26 26.8 28.5 25.5C33 23.3 36.5 21.3 40 19.3C44 17 47 15.2 50.4 14C52.5 13.4 54.5 13.4 57 13.4H79C82.5 13.4 85 14.6 87.5 16.4C90.5 18.5 92.5 20.4 95.1 22.1C98 24 100.5 24.600 103.7 24.8C109.5 25.2 113.7 28.5 113.7 34V38C113.7 42.5 111 45.9 106.5 45.9H101.8" fill="none" stroke="#ea6b00" stroke-width="5.5" stroke-linejoin="round"/>
<path d="M27.6 37.6A10.75 10.75 0 1 1 27.6 53.2L35.6 52.7L39.7 45.4L35.6 38.1L27.6 38.1Z M97.2 37.6A10.75 10.75 0 1 0 97.2 53.2L89.2 52.7L85.1 45.4L89.2 38.1L97.2 38.1Z" fill="#1b2a47"/>
<rect x="44" y="42.9" width="36.8" height="5.2" fill="#1b2a47"/>
<path d="M36.2 45.4L34.05 49.1H29.75L27.6 45.4L29.75 41.7H34.05Z M97.2 45.4L95.05 49.1H90.75L88.6 45.4L90.75 41.7H95.05Z" fill="#ea6b00"/>
<text x="128" y="28.6" font-family="'Liberation Sans',sans-serif" font-weight="700" font-size="17" fill="#1b2a47" textLength="73" lengthAdjust="spacingAndGlyphs">GARAGE</text>
<text x="130.8" y="50.1" font-family="'Liberation Sans',sans-serif" font-size="17.2" fill="#ea6b00" textLength="68.2" lengthAdjust="spacingAndGlyphs">MASTER</text>
</svg>
<div class="ln" style="left:279px;top:647px;width:784px;height:1px"></div>
<div class="ln" style="left:279px;top:693px;width:784px;height:1px"></div>
<div class="ln" style="left:279px;top:730px;width:784px;height:1px"></div>
<div class="ln" style="left:279px;top:647px;width:1px;height:84px"></div>
<div class="ln" style="left:318px;top:647px;width:1px;height:84px"></div>
<div class="ln" style="left:447px;top:647px;width:1px;height:84px"></div>
<div class="ln" style="left:593px;top:647px;width:1px;height:84px"></div>
<div class="ln" style="left:713px;top:647px;width:1px;height:84px"></div>
<div class="ln" style="left:791px;top:647px;width:1px;height:84px"></div>
<div class="ln" style="left:866px;top:647px;width:1px;height:84px"></div>
<div class="ln" style="left:1062px;top:647px;width:1px;height:84px"></div>
<div class="ln" style="left:279px;top:768px;width:784px;height:1px"></div>
<div class="ln" style="left:279px;top:813px;width:784px;height:1px"></div>
<div class="ln" style="left:279px;top:851px;width:784px;height:1px"></div>
<div class="ln" style="left:279px;top:768px;width:1px;height:84px"></div>
<div class="ln" style="left:318px;top:768px;width:1px;height:84px"></div>
<div class="ln" style="left:531px;top:768px;width:1px;height:84px"></div>
<div class="ln" style="left:741px;top:768px;width:1px;height:84px"></div>
<div class="ln" style="left:866px;top:768px;width:1px;height:84px"></div>
<div class="ln" style="left:1062px;top:768px;width:1px;height:84px"></div>
<div class="ln" style="left:279px;top:889px;width:784px;height:1px"></div>
<div class="ln" style="left:279px;top:934px;width:784px;height:1px"></div>
<div class="ln" style="left:279px;top:972px;width:784px;height:1px"></div>
<div class="ln" style="left:279px;top:889px;width:1px;height:84px"></div>
<div class="ln" style="left:318px;top:889px;width:1px;height:84px"></div>
<div class="ln" style="left:591px;top:889px;width:1px;height:84px"></div>
<div class="ln" style="left:750px;top:889px;width:1px;height:84px"></div>
<div class="ln" style="left:866px;top:889px;width:1px;height:84px"></div>
<div class="ln" style="left:1062px;top:889px;width:1px;height:84px"></div>
<div class="ln" style="left:279px;top:1010px;width:784px;height:1px"></div>
<div class="ln" style="left:279px;top:1055px;width:784px;height:1px"></div>
<div class="ln" style="left:279px;top:1093px;width:784px;height:1px"></div>
<div class="ln" style="left:279px;top:1010px;width:1px;height:84px"></div>
<div class="ln" style="left:318px;top:1010px;width:1px;height:84px"></div>
<div class="ln" style="left:681px;top:1010px;width:1px;height:84px"></div>
<div class="ln" style="left:866px;top:1010px;width:1px;height:84px"></div>
<div class="ln" style="left:1062px;top:1010px;width:1px;height:84px"></div>
<div class="ln" style="left:279px;top:1110px;width:784px;height:1px"></div>
<div class="ln" style="left:279px;top:1152px;width:784px;height:1px"></div>
<div class="ln" style="left:279px;top:1110px;width:1px;height:90px"></div>
<div class="ln" style="left:866px;top:1110px;width:1px;height:90px"></div>
<div class="ln" style="left:1062px;top:1110px;width:1px;height:90px"></div>
<!-- mail -->
<svg style="left:291.6px;top:218px" width="16.8" height="13.6" viewBox="0 0 20 16"><path d="M2 0h16a2 2 0 0 1 2 2v12a2 2 0 0 1-2 2H2a2 2 0 0 1-2-2V2a2 2 0 0 1 2-2zm16 4V2l-8 5-8-5v2l8 5z" fill="#333"/></svg>
<!-- phone -->
<svg style="left:294px;top:243px" width="11.5" height="11.5" viewBox="0 0 512 512"><path d="M493.4 24.6l-104-24c-11.300-2.600-22.900 3.300-27.500 13.900l-48 112c-4.200 9.800-1.400 21.300 6.900 28l60.600 49.600c-36 76.700-98.900 140.500-177.200 177.200l-49.600-60.600c-6.800-8.300-18.200-11.100-28-6.900l-112 48C3.900 366.500-2 378.100.6 389.400l24 104C27.100 504.200 36.700 512 48 512c256.100 0 464-207.500 464-464 0-11.200-7.700-20.900-18.600-23.400z" fill="#333" transform="translate(512 0) scale(-1 1)"/></svg>
<!-- location -->
<svg style="left:291px;top:266.2px" width="14.2" height="17.2" viewBox="0 0 14 20" preserveAspectRatio="none"><path d="M7 0C3.130 0 0 3.130 0 7c0 5.250 7 13 7 13s7-7.750 7-13c0-3.870-3.130-7-7-7zm0 9.500A2.500 2.500 0 1 1 7 4.500a2.500 2.500 0 0 1 0 5z" fill="#333"/></svg>
<!-- close x -->
<svg style="left:1057px;top:65px" width="14" height="14" viewBox="0 0 14 14"><path d="M0.700 0.700L13.300 13.300M13.300 0.700L0.700 13.300" stroke="#7a7a7a" stroke-width="1.6" fill="none"/></svg>

<span class="t" style="left:276.60px;transform-origin:0 50%;top:50.10px;font-size:28px;line-height:42px;color:#353537;transform:scaleX(1.1429);">Garage Management System</span>
<span class="t" style="left:312.30px;transform-origin:0 50%;top:214.25px;font-size:14px;line-height:21px;color:#444;transform:scaleX(1.1489);">dhara@dasinfomedia.com</span>
<span class="t" style="left:312.80px;transform-origin:0 50%;top:239.25px;font-size:14px;line-height:21px;color:#444;transform:scaleX(1.0337);">1234567890</span>
<span class="t" style="left:312.20px;transform-origin:0 50%;top:268.15px;font-size:14px;line-height:21px;color:#444;transform:scaleX(1.0813);">High Court, A 206, Shapath Hexa, Sarkhej -</span>
<span class="t" style="left:312.20px;transform-origin:0 50%;top:293.15px;font-size:14px;line-height:21px;color:#444;transform:scaleX(1.1186);">Gandhinagar Hwy, opp. Sola, Ahmedabad,</span>
<span class="t" style="left:312.20px;transform-origin:0 50%;top:318.15px;font-size:14px;line-height:21px;color:#444;transform:scaleX(1.1174);">Gujarat 380054 , Ahmedabad, Gujarat, India</span>
<span class="t" style="left:293.70px;transform-origin:0 50%;top:351.15px;font-size:14px;line-height:21px;font-weight:700;color:#333;transform:scaleX(0.9223);">IGST:</span>
<span class="t" style="left:330.40px;transform-origin:0 50%;top:351.15px;font-size:14px;line-height:21px;color:#444;transform:scaleX(0.9031);">IGST123</span>
<span class="t" style="left:686.00px;transform-origin:0 50%;top:131.15px;font-size:14px;line-height:21px;font-weight:700;color:#333;transform:scaleX(1.0515);">Name:</span>
<span class="t" style="left:686.00px;transform-origin:0 50%;top:161.35px;font-size:14px;line-height:21px;font-weight:700;color:#333;transform:scaleX(0.9887);">Address:</span>
<span class="t" style="left:686.00px;transform-origin:0 50%;top:212.05px;font-size:14px;line-height:21px;font-weight:700;color:#333;transform:scaleX(1.0567);">Contact:</span>
<span class="t" style="left:686.00px;transform-origin:0 50%;top:243.25px;font-size:14px;line-height:21px;font-weight:700;color:#333;transform:scaleX(0.9758);">Email:</span>
<span class="t" style="left:686.00px;transform-origin:0 50%;top:274.05px;font-size:14px;line-height:21px;font-weight:700;color:#333;transform:scaleX(1.0018);">Invoice:</span>
<span class="t" style="left:686.00px;transform-origin:0 50%;top:304.05px;font-size:14px;line-height:21px;font-weight:700;color:#333;transform:scaleX(0.9933);">Status :</span>
<span class="t" style="left:686.00px;transform-origin:0 50%;top:335.05px;font-size:14px;line-height:21px;font-weight:700;color:#333;transform:scaleX(1.0153);">Date :</span>
<span class="t" style="left:788.30px;transform-origin:0 50%;top:131.15px;font-size:14px;line-height:21px;color:#444;transform:scaleX(1.0815);">Olivia Wilson</span>
<span class="t" style="left:788.30px;transform-origin:0 50%;top:161.35px;font-size:14px;line-height:21px;color:#444;transform:scaleX(1.1077);">Kargil Petrol Pump, Ahmedabad,</span>
<span class="t" style="left:788.30px;transform-origin:0 50%;top:182.05px;font-size:14px;line-height:21px;color:#444;transform:scaleX(1.1234);">Ahmedabad, Gujarat, India</span>
<span class="t" style="left:788.30px;transform-origin:0 50%;top:212.05px;font-size:14px;line-height:21px;color:#444;transform:scaleX(1.0390);">09876543210</span>
<span class="t" style="left:788.30px;transform-origin:0 50%;top:243.25px;font-size:14px;line-height:21px;color:#444;transform:scaleX(1.1237);">Olivia@gmail.com</span>
<span class="t" style="left:788.30px;transform-origin:0 50%;top:274.05px;font-size:14px;line-height:21px;color:#444;transform:scaleX(1.0915);">00000032</span>
<span class="t" style="left:788.30px;transform-origin:0 50%;top:304.05px;font-size:14px;line-height:21px;color:#228B22;transform:scaleX(1.0465);">Full Paid</span>
<span class="t" style="left:788.30px;transform-origin:0 50%;top:335.05px;font-size:14px;line-height:21px;color:#444;transform:scaleX(0.9776);">2023-11-17</span>
<span class="t" style="left:282.10px;transform-origin:0 50%;top:423.35px;font-size:14px;line-height:21px;color:#444;transform:scaleX(1.1291);">Coupon Number</span>
<span class="t" style="left:444.70px;transform-origin:0 50%;top:423.35px;font-size:14px;line-height:21px;color:#444;transform:scaleX(1.1147);">Vehicle Name</span>
<span class="t" style="left:581.60px;transform-origin:0 50%;top:423.35px;font-size:14px;line-height:21px;color:#444;transform:scaleX(1.0994);">Number Plate</span>
<span class="t" style="left:715.40px;transform-origin:0 50%;top:423.35px;font-size:14px;line-height:21px;color:#444;transform:scaleX(1.0766);">In Date</span>
<span class="t" style="left:847.10px;transform-origin:0 50%;top:423.35px;font-size:14px;line-height:21px;color:#444;transform:scaleX(1.0976);">Out Date</span>
<span class="t" style="left:286.40px;transform-origin:0 50%;top:465.15px;font-size:14px;line-height:21px;font-weight:700;color:#333;transform:scaleX(1.0713);">J000038</span>
<span class="t" style="left:448.40px;transform-origin:0 50%;top:465.15px;font-size:14px;line-height:21px;font-weight:700;color:#333;transform:scaleX(1.0122);">Paid Service</span>
<span class="t" style="left:585.30px;transform-origin:0 50%;top:465.15px;font-size:14px;line-height:21px;font-weight:700;color:#333;transform:scaleX(0.9607);">BMW X7</span>
<span class="t" style="left:719.10px;transform-origin:0 50%;top:465.15px;font-size:14px;line-height:21px;font-weight:700;color:#333;transform:scaleX(0.9363);">GJ-01ah-1111</span>
<span class="t" style="left:851.10px;transform-origin:0 50%;top:465.15px;font-size:14px;line-height:21px;font-weight:700;color:#333;transform:scaleX(0.9754);">2023-11-17</span>
<span class="t" style="left:964.20px;transform-origin:0 50%;top:464.15px;font-size:14px;line-height:21px;font-weight:700;color:#333;transform:scaleX(0.9853);">2023-11-17</span>
<span class="t" style="left:282.40px;transform-origin:0 50%;top:506.15px;font-size:14px;line-height:21px;color:#444;transform:scaleX(1.0998);">Assigned To</span>
<span class="t" style="left:426.60px;transform-origin:0 50%;top:506.15px;font-size:14px;line-height:21px;color:#444;transform:scaleX(1.1134);">Repair Category</span>
<span class="t" style="left:585.60px;transform-origin:0 50%;top:506.15px;font-size:14px;line-height:21px;color:#444;transform:scaleX(1.0822);">Service Type</span>
<span class="t" style="left:709.90px;transform-origin:0 50%;top:506.15px;font-size:14px;line-height:21px;color:#444;transform:scaleX(1.0935);">Details</span>
<span class="t" style="left:286.40px;transform-origin:0 50%;top:548.15px;font-size:14px;line-height:21px;font-weight:700;color:#333;transform:scaleX(1.0125);">Evelyn Emma</span>
<span class="t" style="left:430.60px;transform-origin:0 50%;top:548.15px;font-size:14px;line-height:21px;font-weight:700;color:#333;transform:scaleX(1.0229);">Breakdown</span>
<span class="t" style="left:589.30px;transform-origin:0 50%;top:548.15px;font-size:14px;line-height:21px;font-weight:700;color:#333;transform:scaleX(1.0176);">Paid</span>
<span class="t" style="left:279.00px;transform-origin:0 50%;top:618.15px;font-size:14px;line-height:21px;font-weight:700;color:#333;transform:scaleX(1.0398);">Service Charges</span>
<span class="t" style="left:287.00px;transform-origin:0 50%;top:739.15px;font-size:14px;line-height:21px;font-weight:700;color:#333;transform:scaleX(1.0360);">Other Service Charges</span>
<span class="t" style="left:287.00px;transform-origin:0 50%;top:860.35px;font-size:14px;line-height:21px;font-weight:700;color:#333;transform:scaleX(1.0268);">MOT Test Service Charge</span>
<span class="t" style="left:287.00px;transform-origin:0 50%;top:981.55px;font-size:14px;line-height:21px;font-weight:700;color:#333;transform:scaleX(1.0393);">Wash Bay Service Charge</span>
<span class="t" style="left:283.20px;transform-origin:0 50%;top:660.45px;font-size:14px;line-height:21px;color:#444;transform:scaleX(1.2826);">#</span>
<span class="t" style="left:322.20px;transform-origin:0 50%;top:660.45px;font-size:14px;line-height:21px;color:#444;transform:scaleX(1.1388);">Category</span>
<span class="t" style="left:451.20px;transform-origin:0 50%;top:660.45px;font-size:14px;line-height:21px;color:#444;transform:scaleX(1.1096);">Observation Point</span>
<span class="t" style="left:597.20px;transform-origin:0 50%;top:660.45px;font-size:14px;line-height:21px;color:#444;transform:scaleX(1.1175);">Product Name</span>
<span class="t" style="left:717.20px;transform-origin:0 50%;top:660.45px;font-size:14px;line-height:21px;color:#444;transform:scaleX(1.0919);">Price (kr)</span>
<span class="t" style="left:795.20px;transform-origin:0 50%;top:660.45px;font-size:14px;line-height:21px;color:#444;transform:scaleX(1.1411);">Quantity</span>
<span class="t" style="left:870.20px;transform-origin:0 50%;top:660.45px;font-size:14px;line-height:21px;color:#444;transform:scaleX(1.1016);">Total Price (kr)</span>
<span class="t" style="left:287.20px;transform-origin:0 50%;top:702.65px;font-size:14px;line-height:21px;color:#444;transform:scaleX(0.8500);">1</span>
<span class="t" style="left:326.20px;transform-origin:0 50%;top:702.65px;font-size:14px;line-height:21px;color:#444;transform:scaleX(1.1242);">Tyre condition</span>
<span class="t" style="left:455.20px;transform-origin:0 50%;top:702.65px;font-size:14px;line-height:21px;color:#444;transform:scaleX(1.1132);">Tyre Condition</span>
<span class="t" style="left:601.20px;transform-origin:0 50%;top:702.65px;font-size:14px;line-height:21px;color:#444;transform:scaleX(1.0954);">Cluch Wire</span>
<span class="t" style="left:721.20px;transform-origin:0 50%;top:702.65px;font-size:14px;line-height:21px;color:#444;transform:scaleX(1.0741);">500.00</span>
<span class="t" style="left:799.20px;transform-origin:0 50%;top:702.65px;font-size:14px;line-height:21px;color:#444;transform:scaleX(1.0261);">5</span>
<span class="t" style="left:874.20px;transform-origin:0 50%;top:702.65px;font-size:14px;line-height:21px;color:#444;transform:scaleX(1.0459);">2,500.00</span>
<span class="t" style="left:283.20px;transform-origin:0 50%;top:781.45px;font-size:14px;line-height:21px;color:#444;transform:scaleX(1.2826);">#</span>
<span class="t" style="left:322.20px;transform-origin:0 50%;top:781.45px;font-size:14px;line-height:21px;color:#444;transform:scaleX(1.1337);">Charge for</span>
<span class="t" style="left:535.20px;transform-origin:0 50%;top:781.45px;font-size:14px;line-height:21px;color:#444;transform:scaleX(1.1175);">Product Name</span>
<span class="t" style="left:745.20px;transform-origin:0 50%;top:781.45px;font-size:14px;line-height:21px;color:#444;transform:scaleX(1.0919);">Price (kr)</span>
<span class="t" style="left:870.20px;transform-origin:0 50%;top:781.45px;font-size:14px;line-height:21px;color:#444;transform:scaleX(1.1016);">Total Price (kr)</span>
<span class="t" style="left:287.20px;transform-origin:0 50%;top:822.45px;font-size:14px;line-height:21px;color:#444;transform:scaleX(0.8500);">1</span>
<span class="t" style="left:326.20px;transform-origin:0 50%;top:822.45px;font-size:14px;line-height:21px;color:#444;transform:scaleX(1.1108);">Other Charges</span>
<span class="t" style="left:539.20px;transform-origin:0 50%;top:822.45px;font-size:14px;line-height:21px;color:#444;transform:scaleX(1.1577);">change mirror</span>
<span class="t" style="left:749.20px;transform-origin:0 50%;top:822.45px;font-size:14px;line-height:21px;color:#444;transform:scaleX(1.0741);">500.00</span>
<span class="t" style="left:874.20px;transform-origin:0 50%;top:822.45px;font-size:14px;line-height:21px;color:#444;transform:scaleX(1.0741);">500.00</span>
<span class="t" style="left:283.20px;transform-origin:0 50%;top:902.45px;font-size:14px;line-height:21px;color:#444;transform:scaleX(1.2826);">#</span>
<span class="t" style="left:322.20px;transform-origin:0 50%;top:902.45px;font-size:14px;line-height:21px;color:#444;transform:scaleX(1.0802);">MOT Charge Detail</span>
<span class="t" style="left:595.20px;transform-origin:0 50%;top:902.45px;font-size:14px;line-height:21px;color:#444;transform:scaleX(1.0387);">MOT Test</span>
<span class="t" style="left:754.20px;transform-origin:0 50%;top:902.45px;font-size:14px;line-height:21px;color:#444;transform:scaleX(1.0919);">Price (kr)</span>
<span class="t" style="left:870.20px;transform-origin:0 50%;top:902.45px;font-size:14px;line-height:21px;color:#444;transform:scaleX(1.1016);">Total Price (kr)</span>
<span class="t" style="left:287.20px;transform-origin:0 50%;top:943.55px;font-size:14px;line-height:21px;color:#444;transform:scaleX(0.8500);">1</span>
<span class="t" style="left:326.20px;transform-origin:0 50%;top:943.55px;font-size:14px;line-height:21px;color:#444;transform:scaleX(1.0910);">MOT Testing Charges</span>
<span class="t" style="left:599.20px;transform-origin:0 50%;top:943.55px;font-size:14px;line-height:21px;color:#444;transform:scaleX(1.1595);">Completed</span>
<span class="t" style="left:758.20px;transform-origin:0 50%;top:943.55px;font-size:14px;line-height:21px;color:#444;transform:scaleX(1.0642);">0.00</span>
<span class="t" style="left:874.20px;transform-origin:0 50%;top:943.55px;font-size:14px;line-height:21px;color:#444;transform:scaleX(1.0642);">0.00</span>
<span class="t" style="left:283.20px;transform-origin:0 50%;top:1023.05px;font-size:14px;line-height:21px;color:#444;transform:scaleX(1.2826);">#</span>
<span class="t" style="left:322.20px;transform-origin:0 50%;top:1023.05px;font-size:14px;line-height:21px;color:#444;transform:scaleX(1.1337);">Charge for</span>
<span class="t" style="left:685.20px;transform-origin:0 50%;top:1023.05px;font-size:14px;line-height:21px;color:#444;transform:scaleX(1.0919);">Price (kr)</span>
<span class="t" style="left:870.20px;transform-origin:0 50%;top:1023.05px;font-size:14px;line-height:21px;color:#444;transform:scaleX(1.1016);">Total Price (kr)</span>
<span class="t" style="left:287.20px;transform-origin:0 50%;top:1064.75px;font-size:14px;line-height:21px;color:#444;transform:scaleX(0.8500);">1</span>
<span class="t" style="left:326.20px;transform-origin:0 50%;top:1064.75px;font-size:14px;line-height:21px;color:#444;transform:scaleX(1.0759);">Wash Bay Service</span>
<span class="t" style="left:689.20px;transform-origin:0 50%;top:1064.75px;font-size:14px;line-height:21px;color:#444;transform:scaleX(0.9817);">1,000.00</span>
<span class="t" style="left:874.20px;transform-origin:0 50%;top:1064.75px;font-size:14px;line-height:21px;color:#444;transform:scaleX(0.9817);">1,000.00</span>
<span class="t" style="right:508.50px;transform-origin:100% 50%;top:1121.05px;font-size:14px;line-height:21px;color:#444;transform:scaleX(1.0605);">Fix Service Charge :</span>
<span class="t" style="left:874.10px;transform-origin:0 50%;top:1119.01px;font-size:17px;line-height:26px;font-weight:700;color:#333;transform:scaleX(1.0546);">2,000.00</span>
<span class="t" style="right:508.50px;transform-origin:100% 50%;top:1163.05px;font-size:14px;line-height:21px;color:#444;transform:scaleX(1.1129);">Total Service Amount (kr) :</span>
<span class="t" style="left:874.10px;transform-origin:0 50%;top:1161.01px;font-size:17px;line-height:26px;font-weight:700;color:#333;transform:scaleX(1.0621);">6,000.00</span>
</div>
</body></html>
